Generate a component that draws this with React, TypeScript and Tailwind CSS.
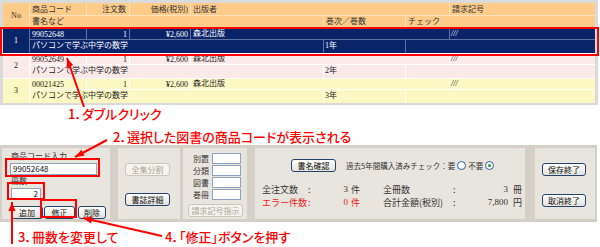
import React from 'react';

type Row = {
  no: number;
  code: string;
  vol: string;
  bg: string;
  line: string;
  text: string;
};

const rows: Row[] = [
  { no: 1, code: '99052648', vol: '1年', bg: 'bg-[#0a246a]', line: 'border-[#5f73a3]', text: 'text-white' },
  { no: 2, code: '99052649', vol: '2年', bg: 'bg-[#fbeaea]', line: 'border-white', text: 'text-[#222]' },
  { no: 3, code: '00021425', vol: '3年', bg: 'bg-[#fbf8c4]', line: 'border-white', text: 'text-[#222]' },
];

function Btn({ label, w, disabled }: { label: string; w: string; disabled?: boolean }) {
  return (
    <div
      className={`${w} flex h-[13px] items-center justify-center rounded-[3px] border text-[8px] leading-none ${
        disabled
          ? 'border-[#c9c7ba] bg-[#f4f3ee] text-[#aca899]'
          : 'border-[#24446f] bg-gradient-to-b from-white to-[#e4e2da] text-[#111]'
      }`}
    >
      {label}
    </div>
  );
}

function Field({ w, value, right }: { w: string; value?: string; right?: boolean }) {
  return (
    <div
      className={`${w} flex h-[12px] items-center border border-[#8ea4c0] bg-white px-[2px] text-[8px] leading-none text-[#111] ${
        right ? 'justify-end' : ''
      }`}
    >
      {value}
    </div>
  );
}

function Radio({ checked }: { checked?: boolean }) {
  return (
    <span className="mx-[2px] inline-flex h-[9px] w-[9px] items-center justify-center rounded-full border border-[#2d5b9a] bg-white">
      {checked && <span className="h-[3px] w-[3px] rounded-full bg-[#21a121]" />}
    </span>
  );
}

function arrowHead(tx: number, ty: number, fx: number, fy: number) {
  const dx = tx - fx;
  const dy = ty - fy;
  const len = Math.sqrt(dx * dx + dy * dy);
  const ux = dx / len;
  const uy = dy / len;
  const bx = tx - ux * 9;
  const by = ty - uy * 9;
  const px = -uy * 3.5;
  const py = ux * 3.5;
  return `${tx},${ty} ${bx + px},${by + py} ${bx - px},${by - py}`;
}

const arrows = [
  { fx: 84, fy: 107, tx: 67, ty: 58 },
  { fx: 107, fy: 140, tx: 75, ty: 157 },
  { fx: 12, fy: 244, tx: 12, ty: 202 },
  { fx: 162, fy: 236, tx: 83, ty: 218 },
];

export default function App() {
  return (
    <div className="relative h-[247px] w-[600px] overflow-hidden bg-white font-['Noto_Sans_CJK_JP',sans-serif] text-[#222]">
      {/* Order table */}
      <div className="w-[598px] bg-[#dadada] px-[3px] pt-[3px] pb-[2px]">
        <div className="flex flex-col gap-px bg-white font-['Liberation_Serif','Noto_Sans_CJK_JP',serif] text-[8px] leading-none">
          <div className="flex h-[25px] bg-[#ffcb89] text-[#333]">
            <div className="flex w-[27px] items-center justify-center border-r border-[#fde2bd]">No</div>
            <div className="flex flex-1 flex-col">
              <div className="flex h-[13px] items-center border-b border-[#fde2bd]">
                <div className="h-full w-[57px] border-r border-[#fde2bd] pl-[2px] pt-[3px]">商品コード</div>
                <div className="h-full w-[43px] border-r border-[#fde2bd] pr-[3px] pt-[3px] text-right">注文数</div>
                <div className="h-full w-[61px] border-r border-[#fde2bd] pr-[2px] pt-[3px] text-right">価格(税別)</div>
                <div className="h-full w-[259px] border-r border-[#fde2bd] pl-[2px] pt-[3px]">出版者</div>
                <div className="h-full flex-1 pl-[2px] pt-[3px]">請求記号</div>
              </div>
              <div className="flex flex-1">
                <div className="h-full w-[294px] border-r border-[#fde2bd] pl-[2px] pt-[2px]">書名など</div>
                <div className="h-full w-[82px] border-r border-[#fde2bd] pl-[2px] pt-[2px]">巻次／巻数</div>
                <div className="h-full flex-1 pl-[2px] pt-[2px]">チェック</div>
              </div>
            </div>
          </div>

          {rows.map((r) => (
            <div key={r.no} className={`flex h-[24px] ${r.bg} ${r.text}`}>
              <div className={`flex w-[27px] items-center justify-center border-r ${r.line}`}>{r.no}</div>
              <div className="flex flex-1 flex-col">
                <div className={`flex h-[11px] border-b ${r.line}`}>
                  <div className={`w-[57px] border-r ${r.line} pl-[2px] pt-[2px]`}>{r.code}</div>
                  <div className={`w-[43px] border-r ${r.line} pr-[2px] pt-[2px] text-right`}>1</div>
                  <div className={`w-[61px] border-r ${r.line} pr-[2px] pt-[2px] text-right`}>¥2,600</div>
                  <div className={`w-[259px] border-r ${r.line} pl-[2px] pt-[1px]`}>森北出版</div>
                  <div className="flex-1 pl-[1px] pt-[1px] italic">///</div>
                </div>
                <div className="flex flex-1">
                  <div className={`w-[294px] border-r ${r.line} pl-[2px] pt-[2px]`}>パソコンで学ぶ中学の数学</div>
                  <div className={`w-[82px] border-r ${r.line} pl-[1px] pt-[2px]`}>{r.vol}</div>
                  <div className="flex-1" />
                </div>
              </div>
            </div>
          ))}
        </div>
      </div>

      {/* Notes 1 and 2 */}
      <div className="mt-px h-[16px] pl-[68px] text-[13px] leading-[16px] font-medium text-[#ff0000] [font-feature-settings:'palt']">
        1．ダブルクリック
      </div>
      <div className="mt-[7px] h-[16px] pl-[113px] text-[13px] leading-[16px] font-medium text-[#ff0000] [font-feature-settings:'palt']">
        2．選択した図書の商品コードが表示される
      </div>

      {/* Input panel */}
      <div className="flex h-[77px] w-[597px] bg-[#d4d0c8] py-[3px] text-[8px] leading-none text-[#333]">
        <div className="ml-[2px] flex w-[108px] flex-col bg-[#e8e5de] pl-[8px] pt-[4px]">
          <div className="pl-[1px]">商品コード入力</div>
          <div className="mt-[3px]">
            <Field w="w-[87px]" value="99052648" />
          </div>
          <div className="mt-[2px] pl-[1px]">冊数</div>
          <div className="mt-[3px] pl-[1px]">
            <Field w="w-[30px]" value="2" right />
          </div>
          <div className="mt-[6px] flex pl-[1px]">
            <Btn label="追加" w="w-[32px]" />
            <div className="ml-px">
              <Btn label="修正" w="w-[31px]" />
            </div>
            <div className="ml-[3px]">
              <Btn label="削除" w="w-[28px]" />
            </div>
          </div>
        </div>

        <div className="ml-[8px] flex w-[62px] flex-col bg-[#e8e5de] pl-[7px] pt-[15px]">
          <Btn label="全集分割" w="w-[45px]" disabled />
          <div className="mt-[17px]">
            <Btn label="書誌詳細" w="w-[45px]" />
          </div>
        </div>

        <div className="ml-[3px] flex w-[64px] flex-col bg-[#e8e5de] pt-[5px] pl-[5px]">
          {['別置', '分類', '図書', '巻冊'].map((l) => (
            <div key={l} className="mb-px flex h-[11px] items-center">
              <div className="w-[24px] pr-[3px] text-right">{l}</div>
              <div className="h-[11px] w-[29px] border border-[#8ea4c0] bg-white" />
            </div>
          ))}
          <div className="mt-[3px]">
            <Btn label="請求記号指示" w="w-[55px]" disabled />
          </div>
        </div>

        <div className="ml-[8px] flex w-[270px] flex-col bg-[#e8e5de] pl-[7px] pt-[11px]">
          <div className="flex items-center">
            <div className="ml-[29px]">
              <Btn label="書名確認" w="w-[45px]" />
            </div>
            <div className="ml-[10px] flex items-center text-[7.5px]">
              過去5年間購入済みチェック：要
              <Radio />
              不要
              <Radio checked />
            </div>
          </div>
          <div className="mt-[13px] flex items-center text-[9px]">
            <div className="w-[46px]">全注文数</div>
            <div className="w-[7px]">:</div>
            <div className="w-[33px] text-right font-['Liberation_Serif',serif]">3</div>
            <div className="ml-[3px] w-[32px]">件</div>
            <div className="w-[70px]">全冊数</div>
            <div className="w-[7px]">:</div>
            <div className="w-[48px] text-right font-['Liberation_Serif',serif]">3</div>
            <div className="ml-[5px]">冊</div>
          </div>
          <div className="mt-[4px] flex items-center text-[9px]">
            <div className="w-[46px] text-[#ee2020]">エラー件数</div>
            <div className="w-[7px] text-[#ee2020]">:</div>
            <div className="w-[33px] text-right font-['Liberation_Serif',serif] text-[#ee2020]">0</div>
            <div className="ml-[3px] w-[32px] text-[#ee2020]">件</div>
            <div className="w-[70px]">合計金額(税別)</div>
            <div className="w-[7px]">:</div>
            <div className="w-[48px] text-right font-['Liberation_Serif',serif]">7,800</div>
            <div className="ml-[5px]">円</div>
          </div>
        </div>

        <div className="ml-[10px] flex w-[60px] flex-col bg-[#e8e5de] pl-[7px] pt-[15px]">
          <Btn label="保存終了" w="w-[44px]" />
          <div className="mt-[18px]">
            <Btn label="取消終了" w="w-[44px]" />
          </div>
        </div>
      </div>

      {/* Notes 3 and 4 */}
      <div className="mt-[8px] flex h-[13px] text-[13px] leading-[13px] font-medium text-[#ff0000] [font-feature-settings:'palt']">
        <div className="w-[165px] pl-[18px]">3．冊数を変更して</div>
        <div>4．「修正」ボタンを押す</div>
      </div>

      {/* Red highlight boxes */}
      <div className="absolute left-0 top-[27px] h-[29px] w-[599px] border-2 border-[#ff0000]" />
      <div className="absolute left-[5px] top-[158px] h-[19px] w-[95px] border-2 border-[#ff0000]" />
      <div className="absolute left-[7px] top-[182px] h-[18px] w-[38px] border-2 border-[#ff0000]" />
      <div className="absolute left-[40px] top-[199px] h-[19px] w-[37px] border-2 border-[#ff0000]" />

      <svg className="pointer-events-none absolute left-0 top-0" width="600" height="247">
        {arrows.map((a, i) => (
          <g key={i}>
            <line x1={a.fx} y1={a.fy} x2={a.tx} y2={a.ty} stroke="#ff0000" strokeWidth="2" />
            <polygon points={arrowHead(a.tx, a.ty, a.fx, a.fy)} fill="#ff0000" />
          </g>
        ))}
      </svg>
    </div>
  );
}
